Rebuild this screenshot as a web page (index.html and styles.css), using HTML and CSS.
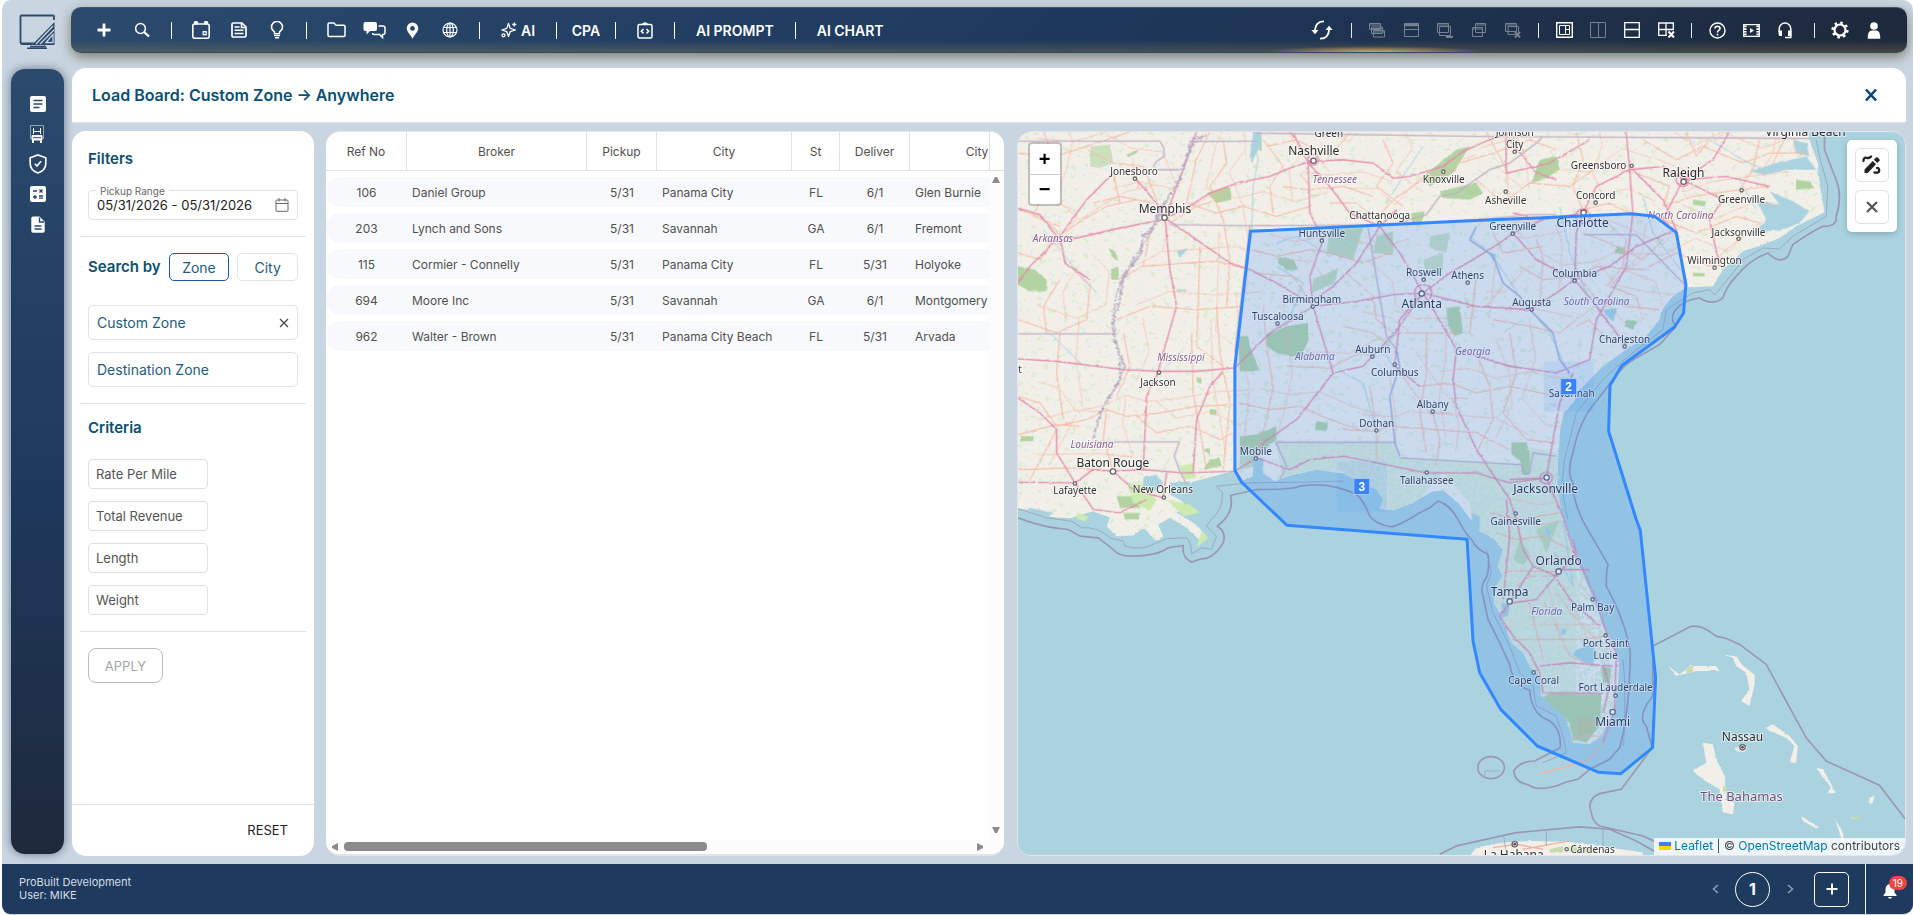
FILE: index.html
```html
<!DOCTYPE html>
<html lang="en">
<head>
<meta charset="utf-8">
<meta name="viewport" content="width=device-width, initial-scale=1">
<title>Load Board</title>
<link rel="stylesheet" href="styles.css">
</head>
<body>
<div class="app">
  <header class="top">
    <a class="logo" href="#" aria-label="Home">
      <svg width="36" height="36" viewBox="0 0 36 36" fill="none" stroke="#2b4a6c">
        <path d="M35 6V2.500Q35 1.500 34 1.500H2.500Q1.500 1.500 1.500 2.500V29" stroke-width="1.800"/>
        <path d="M1 28.500H16L13 31H3Q1 31 1 29z" fill="#2b4a6c" stroke="none"/>
        <path d="M35.500 8V31H13z" fill="#2b4a6c" stroke="none"/>
        <path d="M17 30L34 12M21 30L35 16M27 28.500L34 20.500V28.500z" stroke="#c9d5e1" stroke-width="1.300"/>
        <path d="M11 32.500H27M8 34.200H28" stroke-width="1.600"/>
      </svg>
    </a>
    <nav class="topbar" aria-label="Main">
      <div class="tools">
        <button class="tool" aria-label="Add"><svg width="14" height="14" viewBox="0 0 14 14"><path d="M7 .5V13.500M.5 7H13.500" stroke-width="2.800"/></svg></button>
        <button class="tool" aria-label="Search"><svg width="16" height="16" viewBox="0 0 16 16"><circle cx="6.500" cy="6.500" r="4.900" stroke-width="1.500"/><path d="M10 10L15 14.500" stroke-width="2.300"/></svg></button>
        <span class="divider"></span>
        <button class="tool" aria-label="Calendar"><svg width="20" height="20" viewBox="0 0 20 20"><rect x="1.800" y="4" width="16.400" height="14.200" rx="2" stroke-width="1.600"/><path d="M4.500 2.800h1M14.500 2.800h1" stroke-width="3.600" stroke-linecap="round"/><rect x="12.200" y="11.700" width="3" height="3" stroke-width="1.300"/></svg></button>
        <button class="tool" aria-label="News"><svg width="16" height="16" viewBox="0 0 16 16"><path d="M1 2.200Q1 1 2.200 1H11L15 5V13.800Q15 15 13.800 15H2.200Q1 15 1 13.800z" stroke-width="1.700"/><path d="M3.500 5H8.500M3.500 8.200H12.500M3.500 11.500H12.500M10.500 1V5.500H15" stroke-width="1.600"/></svg></button>
        <button class="tool" aria-label="Ideas"><svg width="14" height="18" viewBox="0 0 14 18"><path d="M4.500 12.800V10.800Q1.500 9 1.500 6A5.200 5.200 0 0 1 12.500 6Q12.500 9 9.500 10.800V12.800z" stroke-width="1.500"/><path d="M4 14.600H10M5 16.800H9" stroke-width="1.400"/></svg></button>
        <span class="divider"></span>
        <button class="tool" aria-label="Files"><svg width="19" height="16" viewBox="0 0 19 16"><path d="M1 2.200Q1 1 2.200 1H7L9 3.200H16.800Q18 3.200 18 4.400V13.300Q18 14.500 16.800 14.500H2.200Q1 14.500 1 13.300z" stroke-width="1.500"/></svg></button>
        <button class="tool" aria-label="Messages"><svg width="23" height="18" viewBox="0 0 23 18"><path d="M2 1H12Q14 1 14 3V8Q14 10 12 10H7L3.500 13.500V10H2Q.5 10 .5 8V3Q.5 1 2 1z" fill="#fff" stroke="none"/><path d="M15.500 5H20Q22 5 22 7V11.500Q22 13.500 20 13.500H19.500V16.500L16.500 13.500H11Q9.500 13.500 9.500 12" stroke-width="1.500"/></svg></button>
        <button class="tool" aria-label="Locations"><svg width="13" height="17" viewBox="0 0 13 17"><path fill-rule="evenodd" d="M6.500.5A5.800 5.800 0 0 1 12.300 6.300C12.300 10 8.500 12.500 6.500 16.800C4.500 12.500.7 10 .7 6.300A5.800 5.800 0 0 1 6.500.5zM6.500 4A2.400 2.400 0 1 0 6.500 8.800A2.400 2.400 0 1 0 6.500 4z" fill="#fff" stroke="none"/></svg></button>
        <button class="tool" aria-label="Web"><svg width="16" height="16" viewBox="0 0 16 16" stroke-width="1.200"><circle cx="8" cy="8" r="7"/><ellipse cx="8" cy="8" rx="3.300" ry="7"/><path d="M1.500 5.500H14.500M1.500 10.500H14.500M8 1V15"/></svg></button>
        <span class="divider"></span>
        <button class="tool tool--ai"><svg width="16" height="16" viewBox="0 0 16 16" stroke-width="1.300"><path d="M7.500 1.500L9.200 6.300L14.500 8L9.200 9.700L7.500 14.500L5.800 9.700L.8 8L5.800 6.300z" stroke-linejoin="round"/><path d="M13.300.5v4M11.300 2.500h4"/><circle cx="2.500" cy="13.300" r="1.500"/></svg>AI</button>
        <span class="divider"></span>
        <button class="tool">CPA</button>
        <span class="divider"></span>
        <button class="tool" aria-label="Code"><svg width="16" height="17" viewBox="0 0 16 17" stroke-width="1.500"><rect x="1" y="2.500" width="14" height="13.500" rx="1.500"/><path d="M5.500 2.500Q8-.6 10.500 2.500" /><path d="M6.500 7L4.300 9.200L6.500 11.400M9.500 7L11.700 9.200L9.500 11.400"/></svg></button>
        <span class="divider"></span>
        <button class="tool tool--text">AI PROMPT</button>
        <span class="divider"></span>
        <button class="tool tool--text">AI CHART</button>
      </div>
      <div class="tools tools--right">
        <button class="tool" aria-label="Refresh"><svg width="22" height="20" viewBox="0 0 22 20" stroke-width="1.800"><path d="M13 1.300Q4.500 1 3.800 11"/><path d="M9 18.700Q17.500 19 18.200 9"/><path d="M.3 10H7.500L4 14.300zM14.500 10H21.700L18 5.700z" fill="#fff" stroke="none"/></svg></button>
        <span class="divider divider--wide"></span>
        <button class="tool tool--off" aria-label="Cascade" disabled><svg width="16" height="16" viewBox="0 0 16 16"><path d="M.5 1.500H11.500V7.500H.5zM2.500 5H13.500V11.500H2.500zM4.500 8.500H15.500V15H4.500zM.5 3H11.500M2.500 6.500H13.500M4.500 10H15.500"/></svg></button>
        <button class="tool tool--off" aria-label="Maximize" disabled><svg width="15" height="14" viewBox="0 0 15 14"><path d="M.5 .5H14.500V13.500H.5zM.5 6.500H14.500"/><path d="M.5 2H14.500" stroke-width="2.500"/></svg></button>
        <button class="tool tool--off" aria-label="Minimize" disabled><svg width="16" height="16" viewBox="0 0 16 16"><path d="M.5 1.500H11.500V10.500H.5zM2.500 4.500H13.500V13.500H2.500zM.5 3H11.500"/><path d="M9 15H16" stroke-width="2"/></svg></button>
        <button class="tool tool--off" aria-label="Restore" disabled><svg width="14" height="14" viewBox="0 0 14 14"><path d="M3.500 .500H13.500V9.500H3.500zM.5 4.500H10.500V13.500H.5zM3.500 2H13.500M.5 6H10.500"/></svg></button>
        <button class="tool tool--off" aria-label="Close windows" disabled><svg width="16" height="16" viewBox="0 0 16 16"><path d="M.5 1.500H11.500V9.500H.5zM3 4.500H13.500V12.500H3zM.5 3H11.500"/><path d="M10 10L15 15.500M15 10L10 15.500" stroke-width="2"/></svg></button>
        <span class="divider"></span>
        <button class="tool" aria-label="Layout"><svg width="17" height="16" viewBox="0 0 17 16"><path d="M.7 .7H16.300V15.300H.7z" stroke-width="1.400"/><path d="M3.500 3.500H13.500V12.500H3.500zM9.500 3.500V12.500M9.500 7.500H13.500"/></svg></button>
        <button class="tool tool--off" aria-label="Two columns" disabled><svg width="16" height="16" viewBox="0 0 16 16"><path d="M.5 .5H15.500V15.500H.5zM8.500 .5V15.500"/></svg></button>
        <button class="tool" aria-label="Two rows"><svg width="16" height="16" viewBox="0 0 16 16"><path d="M.7 .7H15.300V15.300H.7zM.7 7.500H15.300" stroke-width="1.300"/></svg></button>
        <button class="tool" aria-label="Clear grid"><svg width="17" height="16" viewBox="0 0 17 16"><path d="M9 13.300H.7V1H15.300V8M.7 7.500H15.300M8 1V13.300" stroke-width="1.300"/><path d="M10.500 9.500L16 15.500M16 9.500L10.500 15.500" stroke-width="2"/></svg></button>
        <span class="divider"></span>
        <button class="tool" aria-label="Help"><svg width="17" height="17" viewBox="0 0 17 17"><circle cx="8.500" cy="8.500" r="7.500" stroke-width="1.400"/><path d="M6 6.500Q6 4.200 8.500 4.200T11 6.500Q11 7.600 9.700 8.400T8.500 10.500M8.500 11.700v1.700" stroke-width="1.600"/></svg></button>
        <button class="tool" aria-label="Videos"><svg width="17" height="13" viewBox="0 0 17 13"><path d="M.7 .7H16.300V12.300H.7z" stroke-width="1.200"/><path d="M2.300 1.500V12M14.700 1.500V12" stroke-width="2.600" stroke-dasharray="1.700 1"/><path d="M7 4L11 6.500L7 9z" fill="#fff" stroke="none"/></svg></button>
        <button class="tool" aria-label="Support"><svg width="14" height="17" viewBox="0 0 14 17"><path d="M1.200 10V6.800A5.800 5.800 0 0 1 12.800 6.800V15.500H7" stroke-width="1.500"/><path d="M.5 8.500H4V14H2Q.5 14 .5 12zM13.500 8.500H10V14H13.500z" fill="#fff" stroke="none"/></svg></button>
        <span class="divider divider--wide"></span>
        <button class="tool" aria-label="Settings"><svg width="18" height="18" viewBox="0 0 18 18"><circle cx="9" cy="9" r="5.500" stroke-width="2.200"/><circle cx="9" cy="9" r="7.400" stroke-width="2.400" stroke-dasharray="2.600 3.210"/></svg></button>
        <button class="tool" aria-label="Account"><svg width="14" height="17" viewBox="0 0 14 17"><circle cx="7" cy="4" r="3.800" fill="#fff" stroke="none"/><path d="M.7 16.800Q.5 9 4.500 8.500H9.500Q13.500 9 13.300 16.800z" fill="#fff" stroke="none"/></svg></button>
      </div>
    </nav>
  </header>

  <div class="body">
    <nav class="sidebar" aria-label="Sections">
      <button class="side" aria-label="Documents"><svg width="16" height="16" viewBox="0 0 16 16"><rect width="16" height="16" rx="2" fill="#fff"/><path d="M3.500 4.500H12.500M3.500 8H12.500M3.500 11.500H9.500" stroke="#2b4a6c" stroke-width="1.600"/></svg></button>
      <button class="side" aria-label="Trucks"><svg width="15" height="18" viewBox="0 0 15 18" fill="none" stroke="#fff"><path d="M.5 14V.5H13.500V14" stroke="#8fa3b8"/><path d="M3.500 3V9M10.500 3V9M3.500 6.500H10.500"/><path d="M2 10.500H12V15H2z" fill="#fff"/><path d="M3 12.700H11" stroke="#2b4a6c"/><path d="M3 15V18M11 15V18" stroke-width="2"/></svg></button>
      <button class="side" aria-label="Safety"><svg width="18" height="20" viewBox="0 0 18 20" fill="none" stroke="#fff"><path d="M9 1L16.800 3.800V9.500C16.800 14 14 17.300 9 19C4 17.300 1.200 14 1.200 9.500V3.800z" stroke-width="1.700"/><path d="M5.800 9.800L8 12L12 7.200" stroke-width="1.700"/></svg></button>
      <button class="side" aria-label="Calculator"><svg width="16" height="16" viewBox="0 0 16 16"><rect width="16" height="16" rx="2" fill="#fff"/><path d="M3 5H7M9.500 3.500L12.500 6.500M12.500 3.500L9.500 6.500M3 11H7M5 9V13M9 10H13M9 12.200H13" stroke="#264567" stroke-width="1.300"/></svg></button>
      <button class="side" aria-label="Reports"><svg width="14" height="17" viewBox="0 0 14 17"><path d="M2 .5H8.500L13.700 5.700V15Q13.700 16.800 12 16.800H2Q.3 16.800 .3 15V2.200Q.3 .5 2 .5z" fill="#fff"/><path d="M8.500 1.500V6H13M3.500 10H10.500M3.500 13H10.500" stroke="#264567" stroke-width="1.400" fill="none"/></svg></button>
    </nav>

    <main class="content">
      <section class="title-card">
        <h1>Load Board: Custom Zone → Anywhere</h1>
        <button class="close" aria-label="Close"><svg width="14" height="14" viewBox="0 0 14 14"><path d="M2 1.500L12 12.500M12 1.500L2 12.500" stroke="#0b437c" stroke-width="2.600"/></svg></button>
      </section>

      <div class="panels">
        <form class="filters">
          <section class="block">
            <h2>Filters</h2>
            <div class="range">
              <label for="range">Pickup Range</label>
              <input id="range" type="text" value="05/31/2026 - 05/31/2026">
              <svg width="14" height="14" viewBox="0 0 14 14" fill="none" stroke="#666"><rect x="1" y="2" width="12" height="11.300" rx="1"/><path d="M1 5.500H13M4 0V3.500M10 0V3.500"/></svg>
            </div>
          </section>
          <section class="block">
            <div class="search-by">
              <h2>Search by</h2>
              <button type="button" class="choice choice--on">Zone</button>
              <button type="button" class="choice">City</button>
            </div>
            <div class="zones">
              <div class="zone">
                <input type="text" value="Custom Zone" aria-label="Origin zone">
                <button type="button" class="clear" aria-label="Clear origin zone"><svg width="10" height="10" viewBox="0 0 10 10"><path d="M1 1L9 9M9 1L1 9" stroke="#444" stroke-width="1.200"/></svg></button>
              </div>
              <div class="zone"><input type="text" placeholder="Destination Zone" aria-label="Destination zone"></div>
            </div>
          </section>
          <section class="block block--criteria">
            <h2>Criteria</h2>
            <div class="criteria">
              <input type="text" placeholder="Rate Per Mile" aria-label="Rate Per Mile">
              <input type="text" placeholder="Total Revenue" aria-label="Total Revenue">
              <input type="text" placeholder="Length" aria-label="Length">
              <input type="text" placeholder="Weight" aria-label="Weight">
            </div>
          </section>
          <section class="block block--last"><button type="button" class="apply" disabled>APPLY</button></section>
          <div class="filters-foot"><button type="reset" class="reset">RESET</button></div>
        </form>

        <section class="board">
          <div class="board-main">
            <div class="board-scroll">
              <table>
                <colgroup><col class="c81"><col class="c180"><col class="c70"><col class="c135"><col class="c48"><col class="c70"><col class="c135"></colgroup>
                <thead><tr><th>Ref No</th><th>Broker</th><th>Pickup</th><th>City</th><th>St</th><th>Deliver</th><th>City</th></tr></thead>
                <tbody>
                  <tr><td class="mid">106</td><td>Daniel Group</td><td class="mid">5/31</td><td>Panama City</td><td class="mid">FL</td><td class="mid">6/1</td><td>Glen Burnie</td></tr>
                  <tr><td class="mid">203</td><td>Lynch and Sons</td><td class="mid">5/31</td><td>Savannah</td><td class="mid">GA</td><td class="mid">6/1</td><td>Fremont</td></tr>
                  <tr><td class="mid">115</td><td>Cormier - Connelly</td><td class="mid">5/31</td><td>Panama City</td><td class="mid">FL</td><td class="mid">5/31</td><td>Holyoke</td></tr>
                  <tr><td class="mid">694</td><td>Moore Inc</td><td class="mid">5/31</td><td>Savannah</td><td class="mid">GA</td><td class="mid">6/1</td><td>Montgomery</td></tr>
                  <tr><td class="mid">962</td><td>Walter - Brown</td><td class="mid">5/31</td><td>Panama City Beach</td><td class="mid">FL</td><td class="mid">5/31</td><td>Arvada</td></tr>
                </tbody>
              </table>
            </div>
            <div class="vbar">
              <div class="vbar-head"></div>
              <div class="vbar-track">
                <svg width="8" height="6" viewBox="0 0 8 6"><path d="M0 6L3 0H5L8 6z" fill="#8b8b8b"/></svg>
                <svg width="8" height="6" viewBox="0 0 8 6"><path d="M0 0L3 6H5L8 0z" fill="#8b8b8b"/></svg>
              </div>
            </div>
          </div>
          <div class="hbar">
            <svg width="6" height="8" viewBox="0 0 6 8"><path d="M6 0L0 3V5L6 8z" fill="#8b8b8b"/></svg>
            <div class="hbar-track"><div class="hbar-thumb"></div></div>
            <svg width="6" height="8" viewBox="0 0 6 8"><path d="M0 0L6 3V5L0 8z" fill="#8b8b8b"/></svg>
          </div>
        </section>

        <section class="map" aria-label="Map">
          <svg class="map-canvas" viewBox="1018 132 888 724" preserveAspectRatio="xMidYMid slice">
            <defs>
              <filter id="rough" x="0" y="0" width="1" height="1">
                <feTurbulence type="fractalNoise" baseFrequency=".06" numOctaves="3" seed="4"/>
                <feDisplacementMap in="SourceGraphic" scale="7" xChannelSelector="R" yChannelSelector="G"/>
              </filter>
              <filter id="wiggle" x="-.5" y="0" width="2" height="1">
                <feTurbulence type="fractalNoise" baseFrequency=".12" numOctaves="2" seed="9"/>
                <feDisplacementMap in="SourceGraphic" scale="18" xChannelSelector="R" yChannelSelector="G"/>
              </filter>
              <filter id="woods" x="0" y="0" width="1" height="1">
                <feTurbulence type="fractalNoise" baseFrequency=".05 .06" numOctaves="4" seed="12"/>
                <feColorMatrix values="0 0 0 0 .72  0 0 0 0 .84  0 0 0 0 .64  0 14 0 0 -9.100"/>
              </filter>
              <filter id="ponds" x="0" y="0" width="1" height="1">
                <feTurbulence type="fractalNoise" baseFrequency=".07" numOctaves="3" seed="31"/>
                <feColorMatrix values="0 0 0 0 .67  0 0 0 0 .83  0 0 0 0 .87  0 14 0 0 -9.900"/>
              </filter>
              <filter id="swamp" x="0" y="0" width="1" height="1">
                <feTurbulence type="fractalNoise" baseFrequency=".09" numOctaves="4" seed="7"/>
                <feColorMatrix values="0 0 0 0 .66  0 0 0 0 .82  0 0 0 0 .62  0 7 0 0 -3.300"/>
              </filter>
              <path id="mainland" d="M0 0V1163L60 1172L100 1190L180 1196L250 1175L300 1195L290 1220L320 1250L370 1248L400 1225L440 1265L460 1250L445 1215L480 1195L530 1225L570 1262L590 1250L550 1210L500 1180L525 1150L470 1120L540 1110L530 1092L620 1068L675 1052L700 1082L728 1072L733 1015L756 1018L762 1062L795 1085L840 1068L920 1050L1000 1062L1060 1092L1100 1110L1120 1140L1110 1168L1150 1172L1210 1150L1262 1118L1300 1112L1345 1150L1410 1235L1450 1255L1480 1290L1465 1340L1478 1370L1460 1400L1452 1450L1475 1490L1492 1535L1505 1570L1540 1600L1560 1640L1590 1672L1595 1730L1640 1760L1670 1800L1682 1835L1690 1870L1740 1875L1775 1850L1792 1815L1812 1780L1824 1720L1828 1640L1812 1570L1780 1520L1755 1450L1722 1370L1690 1280L1660 1200L1645 1110L1645 1020L1652 930L1662 880L1690 850L1712 810L1750 770L1782 738L1850 690L1910 650L1950 600L1957 570L1990 530L2030 503L2110 500L2140 450L2200 395L2250 378L2310 355L2360 320L2445 278L2430 190L2425 130L2400 60L2390 0z"/>
              <clipPath id="land-clip"><use href="#mainland"/></clipPath>
              <clipPath id="fl-clip"><path d="M798 968H1152L1170 1015L1535 1035L1700 1010L1850 1900H1500L1380 1150L1300 1060L1200 1170H1080L1000 1050L820 1080z"/></clipPath>
            </defs>
            <rect x="1018" y="132" width="888" height="724" fill="#aad3df"/>
            <g transform="translate(1010 120) scale(.33333)">
              <use href="#mainland" fill="#f2efe9" filter="url(#rough)"/>
              <g clip-path="url(#land-clip)">
                <rect width="2700" height="1960" filter="url(#woods)"/>
                <rect width="2700" height="1960" filter="url(#ponds)"/>
                <path d="M798 968H1152L1170 1015L1535 1035L1540 980L1700 1010V1900H1500L1380 1150L1300 1060L1200 1170H1080L1000 1050L820 1080z" fill="#e2eadb"/>
                <g clip-path="url(#fl-clip)"><rect x="790" y="960" width="1060" height="930" filter="url(#swamp)"/></g>
              </g>

              <!-- forests -->
              <g fill="#b3d3a3" filter="url(#rough)">
                <path d="M240 80L300 75L310 130L270 145L240 140z" opacity=".6"/>
                <path d="M350 105L385 90L380 100L355 112zM295 385L315 395L325 420L310 415zM300 450L325 440L328 480L305 480z"/>
                <path d="M24 440L75 450L110 480L110 515L60 515L24 495z"/>
                <path d="M590 220L660 200L665 240L620 250zM740 36H755V95L740 85z"/>
                <path d="M805 412L850 418L865 450L830 452L805 432z"/>
                <path d="M770 645L830 620L895 610V665L870 715L800 700L770 680z"/>
                <path d="M685 650H715L720 680L750 755H690z"/>
                <path d="M690 950L740 945L800 920V960L770 985L690 985z"/>
                <path d="M690 985L740 990V1040L690 1050z" opacity=".6"/>
                <path d="M910 480L985 445L975 490L905 520zM960 330L1060 325L1030 420L950 400zM1100 350L1150 335L1150 405L1090 400z" opacity=".7"/>
                <path d="M1310 565L1350 560L1360 640L1335 650L1315 620z"/>
                <path d="M1240 420L1300 400L1300 450L1245 450zM1260 350L1320 340L1310 400L1260 385z" opacity=".6"/>
                <path d="M920 905L955 910L950 935L915 930z"/>
                <path d="M1290 215L1350 200L1400 190L1420 220L1380 240L1300 235z"/>
                <path d="M1240 170L1340 90L1380 80L1330 160L1260 200zM1565 190L1590 120L1640 110L1650 150L1610 175z"/>
                <path d="M1205 280L1245 275L1235 315L1205 315z"/>
                <path d="M1820 380L1850 385L1845 405L1815 400zM1850 600L1885 605L1870 630L1845 620z"/>
                <path d="M1505 968H1550L1560 1000V1065H1535V1030L1505 1002z"/>
                <path d="M600 1020L630 1015L635 1040L580 1050zM580 990L600 985V1005zM600 870H620V885H600zM560 775H575V790H560z"/>
                <path d="M30 950H70V965H30zM2050 240L2090 245L2085 260L2050 255zM2050 460H2085V470H2050z"/>
                <path d="M2360 180L2400 185L2415 205L2360 210z"/>
                <path d="M320 1130H390V1165H330zM340 1180H390V1200H345z"/>
                <path d="M1600 1735L1620 1722L1775 1725L1770 1820L1730 1870L1690 1860L1680 1810L1640 1770zM1775 1640L1805 1645L1800 1690L1780 1690z"/>
                <path d="M1530 1260L1560 1300L1540 1340L1510 1320zM1650 1200L1610 1300L1580 1230z" opacity=".6"/>
              </g>
              <!-- marsh -->
              <g fill="#cdebb0" filter="url(#rough)">
                <path d="M350 1090L400 1095L440 1140L420 1175L370 1150zM470 1140L540 1155L570 1180L520 1190zM200 1180L235 1190L225 1205L200 1198zM575 1235L595 1255L560 1285zM510 1040L550 1030L560 1075L520 1080z"/>
                <path d="M1700 1800L1740 1790L1750 1840L1710 1850z" fill="#bfc99a"/>
              </g>
              <!-- lakes and sounds -->
              <g fill="#aad3df" filter="url(#rough)">
                <path d="M400 1075L440 1065L460 1090L440 1115L400 1105zM480 1090L540 1085L530 1130L480 1120z"/>
                <path d="M730 1015L760 1015L762 1070L735 1075zM60 1165L130 1180L110 1195L40 1180z"/>
                <path d="M1700 1590L1745 1575L1762 1600L1750 1635L1715 1625L1690 1605zM1605 1220L1625 1235L1615 1260zM1655 1530L1670 1528L1668 1545H1655z"/>
                <path d="M1780 570L1825 565L1810 605L1790 590zM1435 395L1460 405L1450 425z"/>
                <path d="M730 36H750L755 70L725 130L720 110zM500 395L535 385L510 415zM500 510H530V515H500z"/>
                <path d="M2225 345L2270 300L2240 240L2310 255L2280 215L2350 245L2400 275L2370 310L2320 330L2270 335zM2220 155L2300 130L2390 110L2420 150L2330 150L2270 165zM2350 60L2390 70L2400 110L2360 100z"/>
                <path d="M1475 1450L1500 1455L1495 1490L1475 1495zM1385 1180L1410 1190V1230H1390z"/>
              </g>
              <g fill="none" stroke="#aad3df" stroke-width="3" filter="url(#rough)">
                <path d="M100 330L150 390L190 440L260 520M730 36L745 120L730 200L725 330M800 370L860 350L900 370L960 410L1040 350M440 770L520 690M110 630L180 700L230 750M1240 80L1180 170L1130 250"/>
                <path d="M800 440L880 490L830 620M1000 760L1060 790L1090 900M1160 640L1120 690L1150 740M1380 350L1450 410L1530 530L1620 640L1680 770"/>
                <path d="M1650 260L1680 400L1730 520L1780 580M1900 230L1930 340L2020 460M1540 600L1480 640M2100 60L2200 120L2260 150M2190 180L2240 270M1635 1300L1690 1400L1640 1060"/>
              </g>

              <!-- secondary roads -->
              <g clip-path="url(#land-clip)">
              <g id="minor" fill="none" stroke="#f7b59f" stroke-width="3" filter="url(#rough)">
                <path d="M24 100L130 110L200 90L290 60L360 36M100 36L130 110L110 200L70 290L150 320M24 270L90 290L150 345L220 300L290 260L380 240M230 90L310 130L400 140L440 240M310 160L330 250M24 400L90 420L140 340M190 450L240 500L230 600L140 640L24 600M110 640L100 560L150 480"/>
                <path d="M250 250L330 230L430 250M600 36L560 120L530 250L620 280L700 260L800 290L900 260M640 60L650 130L600 200L640 300L660 420L650 560M480 310L560 260L640 235M530 430L620 425L700 445M320 480L400 440L530 430L560 430M400 440L420 340M320 600L420 560L560 570L700 560M570 380L565 560L560 680L640 740"/>
                <path d="M340 640L360 740L320 830M24 830L90 850L140 920L230 900L290 870L350 890L450 880L560 860L675 855M150 640L140 760L160 900M60 1080L140 930M24 945L140 915L210 920M290 870L280 960L310 1050M380 890L440 940L540 920L630 960L670 940M545 640L550 820L570 930L590 1050M230 1050L310 1056M24 1050L200 1045L310 1055"/>
                <path d="M620 560L630 700L660 850L640 1050M690 850L780 870L870 860L960 900L1050 930M760 560L770 680L790 800L770 900L740 1010M830 740L960 745L1050 700L1090 710M730 390L800 410L900 390L960 400L1060 430L1140 400M910 560L850 470L730 460M960 250L1040 250L1100 300L1150 240L1240 180L1340 150M1120 60L1150 130L1100 200L1180 260"/>
                <path d="M770 80L860 60L960 110L1020 40M820 200L900 210L1000 200L1090 230M760 60L820 140L780 200L790 280M870 160L900 200M1010 460L1090 530L1100 600L1150 640L1240 640L1340 640M1000 620L1090 640L1140 680M1230 800L1320 790L1400 820L1500 800L1640 830M1160 740L1200 800L1260 880L1320 880M1250 640L1250 760L1230 880L1250 1000"/>
                <path d="M1000 930L1100 935L1140 920L1280 930L1400 940L1500 990M1080 800L1100 930L1100 1020M1270 880L1290 960L1280 1040M1400 700L1440 800L1450 900L1400 1000M1500 640L1520 760L1480 880L1550 960L1640 970M1450 600L1560 620L1650 640L1700 600M1530 440L1600 480L1700 470L1760 440L1900 450L2000 400M1590 560L1600 420L1580 360"/>
                <path d="M1350 130L1450 100L1560 60L1640 90M1400 180L1480 250L1560 190L1680 200L1780 130L1870 160M1430 36L1490 150L1500 250M1700 36L1720 120L1690 200L1720 270L1800 250L1880 290M1880 160L1980 200L1960 260L2050 230L2190 210L2280 200M1900 60L2000 120L2080 80L2200 130L2280 100L2390 100M2030 36L2060 110L2100 60M1960 300L2060 340L2180 290L2250 310M2000 400L2100 440L2150 390L2200 350M2250 60L2230 150L2190 210M2330 50L2290 130"/>
                <path d="M1700 460L1760 540L1850 560L1950 570M1790 660L1740 600L1700 620M1860 440L1800 500L1880 530L1900 600M1720 340L1800 370L1900 420L1960 360M1780 300L1850 360L1840 440L1790 500M1450 340L1480 400L1600 380M1370 560L1430 560L1480 500M1400 470L1380 640"/>
                <path d="M1440 1180L1530 1200L1650 1180M1460 1240L1520 1260L1600 1250L1680 1290M1490 1355H1640M1500 1560L1600 1560L1700 1560L1790 1550M1600 1440L1640 1520L1680 1610L1750 1640M1560 1450L1600 1620M1520 1400L1560 1370L1640 1370M1640 1420L1700 1500L1770 1570M1600 1880L1700 1850L1780 1850"/>
              </g>
              <use href="#minor" transform="translate(58 -44)" opacity=".6"/>
              </g>

              <!-- motorways -->
              <g fill="none" stroke="#e58aa9" stroke-width="4" filter="url(#rough)">
                <path d="M24 265L90 285L140 350L200 355L330 325L460 300L530 265L600 220L680 190L780 170L840 145L900 125L1000 120L1090 130L1150 175L1200 170L1300 140L1360 95L1440 60L1500 40"/>
                <path d="M150 350L60 440L24 490M150 350L165 430L240 480M150 350L230 240L310 160M375 175L440 250L465 295L520 150L560 36M465 295L480 450L500 560L460 700L445 755L410 830L400 1050"/>
                <path d="M465 295L560 360L660 430L720 450L800 490L900 550L970 500L1040 430L1110 320L1160 270M445 755L340 750L140 725L24 718M445 755L560 755L675 745L780 640L910 560L1040 545L1150 525L1240 520"/>
                <path d="M24 835L90 880L140 930L140 1000L195 1090L24 1088M195 1090L250 1050L310 1055L400 1050L520 1060L675 1055L740 1015L840 1050L900 1020L1000 1010L1150 1040L1250 1060L1400 1060L1500 1090L1610 1075"/>
                <path d="M310 1055L370 1110L460 1135L470 1060M195 1090L250 1170L330 1180L410 1140M560 900L600 800L640 755M560 900L550 1060M740 1015L760 970L860 900L970 760L940 660L910 560L900 470L940 360L900 280L895 130L860 60L840 36"/>
                <path d="M895 130L960 200L1020 280L1110 320L1170 400L1240 520L1170 600L1155 740L1230 800M1240 520L1300 620L1340 690L1330 780L1340 860L1400 990L1460 1080L1500 1140L1520 1200L1540 1290L1570 1340"/>
                <path d="M970 760L1060 740L1155 640L1240 520L1320 460L1390 420L1470 370L1510 340L1600 300L1720 280L1760 200L1860 150L1960 140L2020 180M1720 280L1700 340L1695 480M1240 520L1400 560L1560 570L1640 520L1695 480L1800 440L1880 380L2000 330L1960 240L1870 150"/>
                <path d="M1695 480L1760 560L1850 680M1510 340L1580 420L1695 480M1340 690L1500 740L1640 760L1740 720L1760 600L1850 440L1870 280L1860 150L1850 36M1488 36L1490 160L1620 130L1740 60M1600 300L1510 280M1500 60L1580 160L1640 180"/>
                <path d="M2020 180L2110 120L2160 36M2020 180L2140 240L2100 300L2130 440M2020 180L1960 300L2000 340M2020 180L2150 170L2280 200M1690 760L1650 850L1630 960L1610 1075L1660 1190L1690 1290L1720 1350L1760 1440L1790 1540L1820 1600L1815 1770L1780 1870M1610 1075L1500 1080"/>
                <path d="M1570 1340L1640 1370L1700 1300L1690 1260M1570 1340L1500 1450L1470 1490L1510 1550L1560 1600L1590 1660L1600 1720L1780 1722M1510 1450L1580 1440L1630 1380L1650 1350H1740M1640 1380L1690 1450L1770 1520M1490 1140L1500 1250L1490 1350L1480 1440M1780 1640L1800 1700L1780 1780M1590 1640L1680 1630L1810 1640"/>
                <circle cx="1240" cy="520" r="26"/><circle cx="1720" cy="290" r="22"/><circle cx="1610" cy="1075" r="18"/><circle cx="910" cy="120" r="16"/><circle cx="2020" cy="180" r="20"/>
              </g>

              <!-- state borders -->
              <g fill="none" stroke="#c2b0c4" stroke-width="4">
                <path d="M24 64H450L462 85V110L440 125L430 140M440 150H510M24 643H310M540 65L740 64M740 40L1400 50L2400 56M480 315L720 318L1150 315L1250 285L1290 230L1340 220L1440 150L1500 130L1580 70L1600 50M1075 325L1130 650L1160 690M720 318L675 700M247 967H508L493 1010L512 1060L530 1095M798 968H1152M798 968L830 1040L810 1080M1170 1015L1535 1035L1545 1065L1560 1060L1570 1000L1640 1010M1150 315L1400 300L1560 285L1640 285M1725 345H1880L2025 495"/>
                <path d="M1160 690L1170 740L1140 830L1150 920L1155 968L1170 1010M1400 320L1380 360L1450 410L1480 490L1530 530L1570 580L1630 640L1650 720L1680 760" stroke="#9ba7cf"/>
              </g>
              <g fill="none" stroke="#b5a9bf" stroke-width="4" filter="url(#wiggle)">
                <path d="M590 45L545 60L530 110L510 180L470 240L440 310L400 350L390 410L345 460L320 520L310 600L320 680L345 740L320 800L270 880L250 960"/>
                <path d="M585 50L550 70L520 140L500 200L455 260L430 320L405 370L370 420L340 480L325 560L305 620L330 720L330 780L285 850L260 920"/>
              </g>

              <!-- islands -->
              <g fill="#f2efe9" filter="url(#rough)">
                <path d="M1975 1640L2010 1665L2040 1640L2120 1640L2130 1655L2060 1655L2000 1670zM2140 1605L2180 1610L2200 1640L2235 1665L2235 1695L2220 1760L2195 1745L2220 1710L2210 1660L2180 1640L2170 1615z"/>
                <path d="M2080 1870L2110 1875L2120 1920L2145 1970L2150 2040L2175 2050L2170 2085L2140 2080L2130 2010L2080 1980L2050 1955L2090 1930z"/>
                <path d="M2175 1885L2215 1882L2205 1898L2180 1896zM2270 1825L2290 1815L2340 1850L2365 1880L2360 1930L2340 1930L2355 1880L2330 1855L2280 1835zM2420 1945L2440 1950L2480 2020L2450 2025L2465 2005zM2580 2035L2595 2030L2590 2050L2580 2055zM2375 2090L2430 2125L2420 2128L2380 2105zM2475 2095L2500 2140L2510 2205L2490 2140z"/>
                <path d="M1380 2210L1400 2185L1480 2170L1570 2165L1680 2168L1730 2175L1800 2185L1900 2200V2230H1380z"/>
              </g>
              <path d="M1450 2185L1520 2175L1600 2190M1590 1962L1660 1945L1740 1920L1780 1870M1540 2190L1680 2165" fill="none" stroke="#f2b49e" stroke-width="4"/>
              <g fill="#c9dcae" filter="url(#rough)"><path d="M2030 1645L2050 1640V1660H2030zM2140 2000L2155 2005L2140 2020zM2525 2090H2550V2100H2525zM1620 2190L1660 2180V2200H1620zM1680 2180L1760 2190V2200H1680z"/></g>

              <!-- maritime boundaries -->
              <g fill="none" stroke="#9b97b3" stroke-width="5" stroke-linejoin="round">
                <path d="M24 1195Q100 1225 175 1230L210 1250L265 1255L310 1290Q325 1310 365 1310Q440 1310 475 1285L520 1278Q515 1315 545 1328L575 1318Q610 1320 640 1270Q650 1235 622 1220Q675 1180 662 1128L740 1110Q850 1110 870 1100Q960 1085 1040 1125Q1060 1140 1080 1190Q1100 1215 1145 1222Q1170 1218 1230 1180L1260 1165L1285 1145Q1320 1155 1345 1200Q1365 1240 1385 1260Q1400 1290 1435 1305Q1440 1350 1430 1375Q1410 1400 1420 1430L1435 1500L1470 1570L1500 1635Q1510 1700 1560 1712Q1565 1780 1610 1800Q1655 1820 1652 1885L1575 1925Q1530 1925 1512 1955Q1515 1990 1560 1998Q1580 2015 1640 2000L1670 1988L1705 1980L1740 1950L1800 1920L1830 1885Q1860 1780 1862 1600Q1850 1510 1790 1400Q1790 1350 1795 1335Q1770 1290 1740 1240Q1690 1160 1690 1090Q1670 1060 1690 1000Q1710 900 1760 845L1825 760L1850 735L1880 715L1950 675L2000 620"/>
                <path d="M2000 620Q1980 600 1995 575Q2020 540 2070 535Q2110 560 2140 535Q2150 500 2180 470Q2220 420 2275 400Q2310 435 2335 410L2350 375Q2400 340 2440 320Q2485 320 2480 290Q2500 230 2480 180L2445 90V50L2430 36"/>
                <path d="M1404 1945A40 33 0 1 1 1484 1945A40 33 0 1 1 1404 1945z"/>
                <path d="M1930 1580L2040 1523Q2060 1515 2090 1530L2120 1550L2150 1557L2190 1575L2270 1635L2390 1855L2450 1925L2610 1998L2688 2100"/>
                <path d="M1930 1580V1730Q1880 1790 1910 1820L1928 1885L1835 2010L1770 2023Q1730 2040 1745 2080Q1750 2110 1770 2120L1900 2150L2020 2205M1290 2205L1340 2180L1520 2140L1710 2123L1800 2130L1880 2165L1950 2205"/>
                <g stroke-width="3" opacity=".7">
                  <path d="M24 1168L110 1195L185 1205L215 1225Q260 1220 300 1255L340 1265L345 1280Q400 1295 440 1270L470 1258L530 1255Q545 1270 545 1303L575 1285L605 1290L620 1250L590 1220L600 1205Q640 1170 638 1120L620 1100L720 1090L880 1088L1000 1085"/>
                  <path d="M1675 1200Q1640 1080 1680 960L1700 880L1780 780L1850 715L1960 630L1970 570L2050 520L2100 510L2115 525L2125 515L2170 460L2200 420L2260 385L2310 388L2350 350L2450 290L2455 200L2430 110L2420 60"/>
                  <path d="M1430 1290L1445 1360L1430 1400L1450 1480L1500 1580L1530 1660L1570 1700L1580 1760L1640 1790L1660 1850L1670 1900L1600 1930M1842 1880Q1850 1700 1840 1620M1482 2150L1490 2200M1610 2135V2180M1780 2130V2180M1425 1970V1955H1470"/>
                </g>
              </g>
              <!-- city dots -->
              <g fill="#fff" stroke="#666" stroke-width="4">
                <circle cx="911" cy="123" r="8"/><circle cx="464" cy="294" r="8"/><circle cx="1236" cy="522" r="8"/><circle cx="309" cy="1056" r="8"/><circle cx="1722" cy="279" r="8"/><circle cx="2022" cy="186" r="8"/><circle cx="1611" cy="1074" r="8"/><circle cx="1647" cy="1356" r="8"/><circle cx="1500" cy="1446" r="8"/><circle cx="1809" cy="1778" r="8"/><circle cx="2199" cy="1884" r="8"/><circle cx="1515" cy="2175" r="8"/>
                <circle cx="375" cy="177" r="5"/><circle cx="1301" cy="156" r="5"/><circle cx="1109" cy="310" r="5"/><circle cx="936" cy="363" r="5"/><circle cx="1242" cy="480" r="5"/><circle cx="1374" cy="489" r="5"/><circle cx="909" cy="561" r="5"/><circle cx="803" cy="612" r="5"/><circle cx="1088" cy="711" r="5"/><circle cx="447" cy="759" r="5"/><circle cx="1155" cy="735" r="5"/><circle cx="1269" cy="876" r="5"/><circle cx="1100" cy="933" r="5"/><circle cx="738" cy="1017" r="5"/><circle cx="195" cy="1092" r="5"/><circle cx="462" cy="1134" r="5"/><circle cx="1251" cy="1059" r="5"/>
                <circle cx="1515" cy="96" r="5"/><circle cx="1488" cy="216" r="5"/><circle cx="1866" cy="138" r="5"/><circle cx="1758" cy="249" r="5"/><circle cx="2196" cy="212" r="5"/><circle cx="1509" cy="342" r="5"/><circle cx="2187" cy="357" r="5"/><circle cx="2115" cy="444" r="5"/><circle cx="1695" cy="483" r="5"/><circle cx="1566" cy="570" r="5"/><circle cx="1845" cy="681" r="5"/><circle cx="1518" cy="1182" r="5"/><circle cx="1749" cy="1440" r="5"/><circle cx="1788" cy="1548" r="5"/><circle cx="1572" cy="1659" r="5"/><circle cx="1818" cy="1729" r="5"/><circle cx="1671" cy="2190" r="5"/>
              </g>
              <g fill="#444"><circle cx="2199" cy="1884" r="4"/><circle cx="1515" cy="2175" r="4"/></g>
            </g>

            <g class="city">
              <text x="1329" y="137">Green</text><text x="1134" y="175">Jonesboro</text><text x="1444" y="183">Knoxville</text><text x="1380" y="219">Chattanooga</text><text x="1322" y="237">Huntsville</text><text x="1424" y="276">Roswell</text><text x="1468" y="279">Athens</text><text x="1312" y="303">Birmingham</text><text x="1278" y="320">Tuscaloosa</text><text x="1373" y="353">Auburn</text><text x="1158" y="386">Jackson</text><text x="1395" y="376">Columbus</text><text x="1433" y="408">Albany</text><text x="1377" y="427">Dothan</text><text x="1256" y="455">Mobile</text><text x="1075" y="495">Lafayette</text><text x="1163" y="494">New Orleans</text><text x="1427" y="484">Tallahassee</text><text x="1020" y="373">t</text>
              <text x="1515" y="136">Johnson</text><text x="1515" y="148">City</text><text x="1599" y="169">Greensboro</text><text x="1596" y="199">Concord</text><text x="1506" y="204">Asheville</text><text x="1742" y="203">Greenville</text><text x="1513" y="230">Greenville</text><text x="1739" y="236">Jacksonville</text><text x="1715" y="264">Wilmington</text><text x="1575" y="277">Columbia</text><text x="1532" y="306">Augusta</text><text x="1625" y="343">Charleston</text><text x="1572" y="397">Savannah</text>
              <text x="1516" y="526">Gainesville</text><text x="1593" y="612">Palm Bay</text><text x="1606" y="648">Port Saint</text><text x="1606" y="660">Lucie</text><text x="1534" y="685">Cape Coral</text><text x="1616" y="692">Fort Lauderdale</text><text x="1593" y="854">Cárdenas</text>
            </g>
            <g class="city city--big">
              <text x="1314" y="155">Nashville</text><text x="1165" y="213">Memphis</text><text x="1422" y="308">Atlanta</text><text x="1113" y="467">Baton Rouge</text><text x="1684" y="177">Raleigh</text><text x="1583" y="227">Charlotte</text><text x="1546" y="494">Jacksonville</text><text x="1559" y="566">Orlando</text><text x="1510" y="597">Tampa</text><text x="1613" y="727">Miami</text><text x="1743" y="742">Nassau</text><text x="1514" y="860">La Habana</text><text x="1806" y="136">Virginia Beach</text>
            </g>
            <g class="city city--state">
              <text x="1335" y="183">Tennessee</text><text x="1053" y="242">Arkansas</text><text x="1181" y="361">Mississippi</text><text x="1315" y="360">Alabama</text><text x="1473" y="355">Georgia</text><text x="1092" y="448">Louisiana</text><text x="1681" y="219">North Carolina</text><text x="1597" y="305">South Carolina</text><text x="1547" y="616">Florida</text>
            </g>
            <text class="city city--country" x="1742" y="802">The Bahamas</text>

            <!-- selected zone -->
            <path transform="translate(1010 120) scale(.33333)" d="M722 335L1350 305L1865 282L1935 290L2000 338L2029 495L2022 580L1995 622L1837 738L1801 798L1797 935L1880 1200L1892 1232L1938 1675L1929 1885L1834 1963L1767 1959L1583 1880L1473 1770L1410 1660L1390 1565L1372 1259L831 1217L695 1088L675 1052V740z" fill="#3388ff" fill-opacity=".2" stroke="#3388ff" stroke-width="9" stroke-linejoin="round"/>
            <g fill="#3b82f6">
              <rect x="1337" y="462" width="50" height="50" opacity=".1"/><rect x="1354" y="479" width="16" height="16" stroke="#a9c6f5"/>
              <rect x="1544" y="362" width="50" height="50" opacity=".1"/><rect x="1561" y="379" width="16" height="16" stroke="#a9c6f5"/>
            </g>
            <text class="pin" x="1362" y="491">3</text>
            <text class="pin" x="1569" y="391">2</text>
          </svg>
          <div class="zoom"><button aria-label="Zoom in">+</button><button aria-label="Zoom out">−</button></div>
          <div class="draw">
            <button aria-label="Draw zone"><svg width="20" height="20" viewBox="0 0 20 20" fill="none" stroke="#222"><path d="M1.500 6Q1.500 2 4.500 2.800T9 1.500M12.500 17.500Q18 18.500 17 14.500Q16.500 12.500 15 13" stroke-width="2.300" stroke-linecap="round"/><path d="M2.500 18V14.500L10.800 6L14 9.300L5.800 18zM12 4.700L14 2.600Q15 1.800 16 2.700L17.400 4.200Q18.200 5.200 17.300 6.100L15.200 8z" fill="#222" stroke="none"/></svg></button>
            <button aria-label="Clear zone"><svg width="12" height="12" viewBox="0 0 12 12"><path d="M1 1L11 11M11 1L1 11" stroke="#555" stroke-width="2.200"/></svg></button>
          </div>
          <div class="credit"><svg width="12" height="8" viewBox="0 0 12 8"><path fill="#4c7be1" d="M0 0h12v4H0z"/><path fill="#ffd500" d="M0 4h12v4H0z"/></svg> <a href="#">Leaflet</a> <span>|</span> © <a href="#">OpenStreetMap</a> contributors</div>
        </section>
      </div>
    </main>
  </div>

  <footer class="footer">
    <div class="who"><div>ProBuilt Development</div><div>User: MIKE</div></div>
    <div class="pager">
      <button class="arrow" aria-label="Previous"><svg width="7" height="10" viewBox="0 0 7 10"><path d="M6 1L1.500 5L6 9"/></svg></button>
      <button class="page">1</button>
      <button class="arrow" aria-label="Next"><svg width="7" height="10" viewBox="0 0 7 10"><path d="M1 1L5.500 5L1 9"/></svg></button>
      <button class="new" aria-label="New page"><svg width="12" height="12" viewBox="0 0 12 12"><path d="M6 .5V11.500M.5 6H11.500" stroke="#fff" stroke-width="2"/></svg></button>
    </div>
    <button class="bell" aria-label="Notifications"><svg width="14" height="16" viewBox="0 0 14 16"><path d="M7 1Q11.500 1.500 11.500 6.500V9.500L13.500 12V13H.5V12L2.500 9.500V6.500Q2.500 1.500 7 1zM5 14H9Q8.500 15.800 7 15.800T5 14z" fill="#fff"/></svg><span class="badge">19</span></button>
  </footer>
</div>
</body>
</html>
```

FILE: styles.css
```css
* { box-sizing: border-box; }
html, body { height: 100%; }
body { margin: 0; background: #fff; font-family: Inter, "Liberation Sans", sans-serif; color: #444; }
button, input { font: inherit; color: inherit; }
button { background: none; border: 0; padding: 0; cursor: pointer; }
svg { display: block; flex: none; }
h1, h2 { margin: 0; font-weight: 600; color: #0b4f71; }

.app { height: 100%; display: flex; flex-direction: column; background: #c9d5e1; border-left: 2px solid #fff; border-bottom: 1px solid #c9d5e1; border-radius: 10px; overflow: hidden; }

/* top bar */
.top { display: flex; padding: 7px 6px 15px 0; }
.logo { width: 69px; padding: 7px 0 0 17px; }
.topbar {
  position: relative; flex: 1; height: 46px; padding: 0 16px 0 14px; border-radius: 10px;
  display: flex; justify-content: space-between; color: #fff;
  border-bottom: 1px solid #2c4866; border-top: 1px solid #3c5878;
  background:
    radial-gradient(ellipse 110px 6px at 71% 100%, rgba(224, 178, 92, .9), transparent),
    linear-gradient(to top, rgba(180, 150, 80, .26), transparent 12px),
    linear-gradient(135deg, #2b4a6c, #1e3a5f 50%, #1e293b);
  box-shadow: 0 4px 12px rgba(80, 70, 30, .6);
}
.tools { display: flex; align-items: center; }
.tool { height: 34px; min-width: 38px; display: flex; align-items: center; justify-content: center; font-size: 14px; font-weight: 600; }
.tools--right .tool { min-width: 34px; width: 34px; }
.tool svg { fill: none; stroke: #fff; }
.tool--off svg { stroke: #76828f; }
.tool--ai { width: 56px; gap: 4px; }
.tool--text { padding: 0 11px; }
.divider { width: 1px; height: 17px; margin: 0 10px; background: #fff; }
.tools--right .divider { margin: 0 8px; height: 15px; background: #e6eaee; }
.tools--right .divider--wide { margin-left: 12px; }

/* side bar */
.body { flex: 1; min-height: 0; display: flex; padding-right: 7px; padding-bottom: 8px; }
.sidebar {
  width: 53px; margin: 1px 8px 2px 9px; padding-top: 20px; border-radius: 14px; flex: none;
  background: linear-gradient(#2b4a6c, #1e3a5f 50%, #1e293b);
  box-shadow: 0 0 10px rgba(40, 55, 75, .6);
  display: flex; flex-direction: column; align-items: center;
}
.side { width: 40px; height: 30px; display: flex; align-items: center; justify-content: center; }

/* page */
.content { flex: 1; min-width: 0; display: flex; flex-direction: column; gap: 8px; position: relative; }
.title-card { height: 55px; padding: 0 28px 0 20px; background: #fff; border-bottom: 1px solid #dfe1e5; border-radius: 14px 14px 0 0; display: flex; align-items: center; justify-content: space-between; flex: none; }
h1 { font-size: 16px; line-height: 22px; }
h2 { font-size: 15px; line-height: 22px; }
.panels { flex: 1; min-height: 0; display: flex; gap: 12px; }

/* filters */
.filters { width: 242px; flex: none; background: #fff; border-radius: 14px; display: flex; flex-direction: column; padding-top: 1px; }
.block { margin: 0 8px; padding: 16px 8px; border-bottom: 1px solid #e2e2e4; }
.block:first-child h2 { margin-bottom: 20px; }
.block--criteria { padding-top: 13px; }
.block--last { border-bottom: 0; }
.range { position: relative; height: 30px; border: 1px solid #e0e0e0; border-radius: 4px; display: flex; align-items: center; padding: 0 8px; color: #666; }
.range label { position: absolute; top: -7px; left: 7px; padding: 0 4px; background: #fff; font-size: 10px; line-height: 14px; }
.range input { flex: 1; min-width: 0; padding: 0; border: 0; outline: 0; color: #222; font-size: 13px; background: none; }
.search-by { display: flex; align-items: center; gap: 8px; }
.search-by h2 { flex: 1; white-space: nowrap; }
.choice { width: 61px; height: 28px; border: 1px solid #e4e4e6; border-radius: 5px; color: #1d5c7d; font-size: 14px; }
.choice--on { border-color: #1d55a5; }
.zones { display: grid; grid-template-columns: minmax(0, 1fr); gap: 12px; margin-top: 24px; }
.zone { height: 35px; border: 1px solid #e2e2e4; border-radius: 5px; display: flex; align-items: center; padding: 0 8px; color: #1d5c7d; font-size: 14px; }
.zone input { flex: 1; min-width: 0; border: 0; padding: 0; outline: 0; background: none; }
.zone input::placeholder { color: #1d5c7d; opacity: 1; }
.criteria { display: grid; gap: 12px; margin-top: 20px; justify-items: start; }
.criteria input { width: 120px; height: 30px; border: 1px solid #e0e0e2; border-radius: 4px; padding: 0 7px; font-size: 13px; outline: 0; }
.criteria input::placeholder { color: #555; opacity: 1; }
.apply { width: 75px; height: 35px; border: 1px solid #bbb; border-radius: 8px; color: #a6a6a6; font-size: 13px; }
.filters-foot { margin-top: auto; height: 52px; border-top: 1px solid #e2e2e4; display: flex; justify-content: flex-end; align-items: center; padding: 0 26px 2px 0; }
.reset { font-size: 13px; color: #222; }

/* load table */
.board { flex: 678 1 0; min-width: 0; background: #fff; border-radius: 14px; overflow: hidden; display: flex; flex-direction: column; border-top: 1px solid #e2e6ea; border-bottom: 2px solid #e4e4e6; }
.board-main { flex: 1; min-height: 0; display: flex; }
.board-scroll { flex: 1; min-width: 0; overflow: hidden; }
table { width: 719px; table-layout: fixed; border-collapse: separate; border-spacing: 0 6px; margin-top: -6px; font-size: 12px; color: #505050; }
.c81 { width: 81px; } .c180 { width: 180px; } .c70 { width: 70px; } .c135 { width: 135px; } .c48 { width: 48px; }
th { height: 39px; padding: 0; font-weight: 400; border-right: 1px solid #e2e2e4; border-bottom: 1px solid #e2e2e4; }
td { height: 30px; padding: 0 5px; background: #f8f9fc; white-space: nowrap; }
td.mid { text-align: center; padding: 0; }
td:first-child { border-radius: 14px 0 0 14px; }
.vbar { width: 15px; display: flex; flex-direction: column; }
.vbar-head { height: 39px; border-left: 1px solid #e2e2e4; border-bottom: 1px solid #e2e2e4; }
.vbar-track { flex: 1; background: #fcfcfc; display: flex; flex-direction: column; justify-content: space-between; align-items: center; padding: 6px 0; }
.hbar { height: 15px; background: #fcfcfc; display: flex; align-items: center; gap: 6px; padding: 0 21px 0 6px; }
.hbar-track { flex: 1; }
.hbar-thumb { width: 58%; height: 9px; border-radius: 4px; background: #8b8b8b; }

/* map */
.map { flex: 888 1 0; min-width: 0; margin-left: 1px; position: relative; border: 1px solid #e2e6ea; border-radius: 14px; overflow: hidden; background: #aad3df; }
.map-canvas { position: absolute; inset: 0; width: 100%; height: 100%; }
.city { font-family: "Noto Sans", sans-serif; font-size: 10px; fill: #333; text-anchor: middle; stroke: rgba(255, 255, 255, .6); stroke-width: 2px; paint-order: stroke; }
.city--big { font-size: 12px; fill: #2b2b2b; }
.city--state { font-style: italic; fill: #86608c; }
.city--country { font-size: 13px; fill: #75527a; }
.pin { font-family: "Liberation Sans", sans-serif; font-size: 12px; font-weight: 700; fill: #fff; text-anchor: middle; }
.zoom { position: absolute; top: 10px; left: 10px; border: 2px solid rgba(0, 0, 0, .2); border-radius: 4px; background-clip: padding-box; background-color: #fff; display: grid; }
.zoom button { width: 30px; height: 30px; font: 700 20px "Liberation Sans", sans-serif; color: #000; }
.zoom button + button { border-top: 1px solid #ccc; }
.draw { position: absolute; top: 8px; right: 8px; padding: 8px; display: grid; gap: 8px; background: #fff; border-radius: 5px; box-shadow: 0 2px 6px rgba(0, 0, 0, .2); }
.draw button { width: 34px; height: 34px; border: 1px solid #e2e2e4; border-radius: 5px; display: flex; align-items: center; justify-content: center; }
.credit { position: absolute; right: 0; bottom: 0; height: 17px; padding: 0 5px; background: rgba(255, 255, 255, .8); font-size: 12px; line-height: 16px; color: #444; white-space: nowrap; }
.credit svg { display: inline-block; }
.credit a { color: #0078a8; text-decoration: none; }

/* footer */
.footer { height: 50px; flex: none; background: #1e3a5f; color: #d5dde6; display: flex; align-items: center; }
.who { flex: 1; padding-left: 17px; font-size: 11px; line-height: 13px; }
.pager { display: flex; align-items: center; padding-right: 16px; }
.arrow { width: 20px; height: 34px; display: flex; align-items: center; justify-content: center; }
.arrow svg { fill: none; stroke: #8fa0b3; stroke-width: 1.5; }
.page { width: 35px; height: 35px; margin: 0 10px; border: 1px solid #fff; border-radius: 50%; color: #fff; font-size: 16px; font-weight: 700; }
.new { width: 35px; height: 35px; margin-left: 14px; border: 1px solid #fff; border-radius: 5px; display: flex; align-items: center; justify-content: center; }
.bell { position: relative; width: 48px; height: 50px; border-left: 1px solid #fff; display: flex; align-items: center; justify-content: center; padding-top: 4px; }
.badge { position: absolute; top: 12px; right: 6px; height: 14px; padding: 0 4px; border-radius: 7px; background: #ef4444; color: #fff; font-size: 10px; line-height: 14px; }
```
